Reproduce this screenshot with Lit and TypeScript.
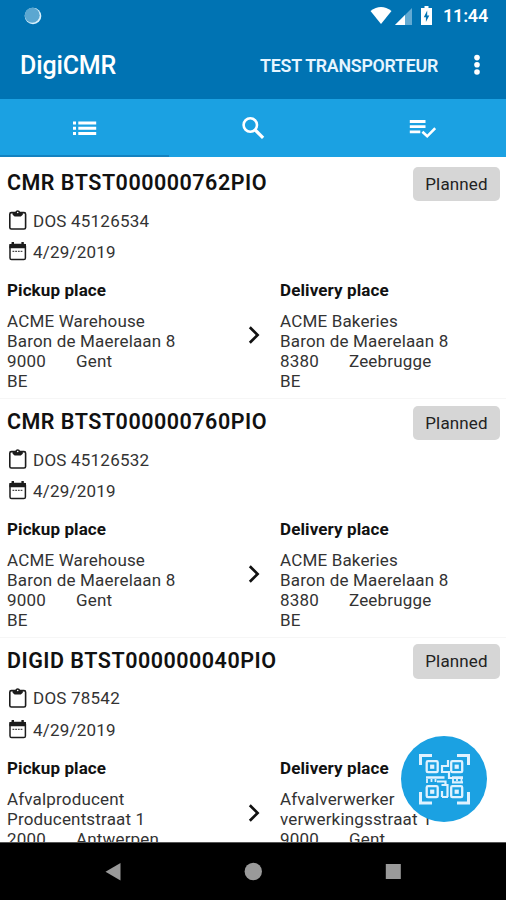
import { LitElement, html, css, svg } from "lit";
import { customElement, property } from "lit/decorators.js";

interface Place { label: string; name: string; street: string; zip: string; city: string; country: string; }
interface Doc { title: string; dossier: string; date: string; status: string; pickup: Place; delivery: Place; }

const acmePickup: Place = { label: "Pickup place", name: "ACME Warehouse", street: "Baron de Maerelaan 8", zip: "9000", city: "Gent", country: "BE" };
const acmeDelivery: Place = { label: "Delivery place", name: "ACME Bakeries", street: "Baron de Maerelaan 8", zip: "8380", city: "Zeebrugge", country: "BE" };

const docs: Doc[] = [
  { title: "CMR BTST000000762PIO", dossier: "DOS 45126534", date: "4/29/2019", status: "Planned", pickup: acmePickup, delivery: acmeDelivery },
  { title: "CMR BTST000000760PIO", dossier: "DOS 45126532", date: "4/29/2019", status: "Planned", pickup: acmePickup, delivery: acmeDelivery },
  {
    title: "DIGID BTST000000040PIO", dossier: "DOS 78542", date: "4/29/2019", status: "Planned",
    pickup: { label: "Pickup place", name: "Afvalproducent", street: "Producentstraat 1", zip: "2000", city: "Antwerpen", country: "BE" },
    delivery: { label: "Delivery place", name: "Afvalverwerker", street: "verwerkingsstraat 1", zip: "9000", city: "Gent", country: "BE" },
  },
];

@customElement("cmr-card")
export class CmrCard extends LitElement {
  @property({ attribute: false }) doc!: Doc;

  static styles = css`
    :host { display: block; box-sizing: border-box; height: 238.8px; padding: 0 6px 0 7px; border-bottom: 1.5px solid #f6f6f6; color: #333; font-size: 17px; line-height: 20px; flex: none; }
    .head { display: flex; justify-content: space-between; height: 45.2px; }
    .title { font-size: 21.5px; font-weight: 600; line-height: 46px; color: #111; letter-spacing: 0.5px; white-space: nowrap; }
    .badge { width: 87px; height: 34.5px; margin-top: 6.8px; border-radius: 5px; background: #d6d6d6; color: #222; line-height: 35px; text-align: center; letter-spacing: 0.15px; }
    .line { display: flex; align-items: center; height: 31.2px; gap: 5px; letter-spacing: 0.22px; }
    .icon { width: 21px; height: 21px; flex: none; color: #1c1c1c; }
    .places { display: grid; grid-template-columns: 233px 40px 1fr; margin-top: 12.7px; }
    .label { font-weight: 700; color: #111; letter-spacing: 0.1px; }
    .address { margin-top: 10.7px; letter-spacing: 0.17px; white-space: nowrap; }
    .town { display: flex; }
    .zip { width: 69px; }
    .arrow { align-self: start; width: 28px; height: 28px; margin-top: 41px; color: #111; }
  `;

  place(p: Place) {
    return html`<div class="place">
      <div class="label">${p.label}</div>
      <div class="address">
        <div>${p.name}</div>
        <div>${p.street}</div>
        <div class="town"><span class="zip">${p.zip}</span><span>${p.city}</span></div>
        <div>${p.country}</div>
      </div>
    </div>`;
  }

  render() {
    const d = this.doc;
    return html`
      <div class="head"><div class="title">${d.title}</div><div class="badge">${d.status}</div></div>
      <div class="line">
        <svg class="icon" viewBox="0 0 21 21"><rect x="2.800" y="2.600" width="15.800" height="16.400" rx="1.600" fill="none" stroke="currentColor" stroke-width="1.600"/><path d="M5.600 2.200h2.600a2.600 2.600 0 0 1 5 0h2.600v2.600l-2 1.600H7.600l-2-1.600z" fill="currentColor"/><circle cx="10.700" cy="2.500" r=".8" fill="#fff"/></svg>
        <span>${d.dossier}</span>
      </div>
      <div class="line">
        <svg class="icon" viewBox="0 0 21 21"><rect x="3" y="3.400" width="15.400" height="15.200" rx="1.600" fill="none" stroke="currentColor" stroke-width="1.500"/><path d="M2.400 3h2.200V1H7v2h7.400V1h2.400v2H19v4.200H2.400z" fill="currentColor"/><path d="M5.500 10.300h10.400" stroke="currentColor" stroke-width="1" stroke-dasharray="1.800 .9"/></svg>
        <span>${d.date}</span>
      </div>
      <div class="places">
        ${this.place(d.pickup)}
        <svg class="arrow" viewBox="0 0 28 28"><path d="M9.800 6.200 17.600 14l-7.800 7.800" fill="none" stroke="currentColor" stroke-width="2.700"/></svg>
        ${this.place(d.delivery)}
      </div>`;
  }
}

const finder = (x: number, y: number) => svg`
  <rect x=${x + 1.2} y=${y + 1.2} width="11" height="11" rx="1.2" fill="none" stroke="#dff2ff" stroke-width="2.3"/>
  <rect x=${x + 4.6} y=${y + 4.6} width="4.2" height="4.2" fill="#dff2ff"/>`;

@customElement("app-root")
export class AppRoot extends LitElement {
  static styles = css`
    :host { display: flex; flex-direction: column; position: relative; width: 506px; height: 900px; overflow: hidden; background: #fff; font-family: Roboto, "Liberation Sans", sans-serif; }
    .top { background: #0073b3; color: #fff; height: 98.5px; flex: none; }
    .status { display: flex; align-items: center; height: 32px; padding: 0 18px 0 23.5px; }
    .spacer { flex: 1; }
    .sync { width: 18px; height: 18px; margin-top: -1px; }
    .signals { width: 66px; height: 22px; margin-right: 7px; }
    .clock { width: 45px; font-size: 18px; font-weight: 600; line-height: 32px; white-space: nowrap; letter-spacing: -0.2px; }
    .bar { display: flex; align-items: center; height: 66px; padding: 0 21px 0 20px; }
    .brand { font-size: 25px; font-weight: 500; letter-spacing: -0.15px; flex: 1; }
    .user { font-size: 17.8px; font-weight: 600; letter-spacing: -0.25px; color: #e6f5ff; white-space: nowrap; }
    .more { width: 16px; height: 24px; margin-left: 31px; }
    .tabs { display: grid; grid-template-columns: repeat(3, 1fr); height: 58.5px; flex: none; background: #1ba1e2; color: #fff; }
    .tab { display: flex; align-items: center; justify-content: center; box-sizing: border-box; padding-top: 2px; border-bottom: 2px solid #1ba1e2; }
    .tab.active { border-bottom-color: #1382c0; }
    .tab svg { width: 28px; height: 28px; }
    .list { display: flex; flex-direction: column; flex: 1; min-height: 0; overflow: hidden; padding-top: 3px; }
    .nav { display: grid; grid-template-columns: repeat(3, 140px); justify-content: center; height: 58px; box-sizing: border-box; flex: none; background: #000; border-top: 1px solid #555; align-items: center; justify-items: center; }
    .nav svg { width: 20px; height: 20px; }
    .fab { position: absolute; left: 401px; top: 736px; width: 86px; height: 86px; border-radius: 50%; background: #1ba1e2; }
    .fab svg { width: 86px; height: 86px; display: block; }
  `;

  render() {
    return html`
      <div class="top">
        <div class="status">
          <svg class="sync" viewBox="0 0 18 18"><circle cx="9" cy="9" r="8.300" fill="#d8f0fc"/><circle cx="8.200" cy="8.200" r="7.500" fill="#5ba7d1"/></svg>
          <div class="spacer"></div>
          <svg class="signals" viewBox="0 0 66 22">
            <path d="M.5 6Q11-2 21.500 6L11 19z" fill="#fff"/>
            <path d="M42 3v17H25z" fill="#62aad3"/><path d="M35 10v10H25z" fill="#fff"/>
            <path d="M54.500 1h4v2H62v17H51V3h3.500z" fill="#fff"/><path d="M57.200 5.500l-3.400 6.700h2.100v4.800l3.400-6.500h-2.100z" fill="#0073b3"/>
          </svg>
          <div class="clock">11:44</div>
        </div>
        <div class="bar">
          <div class="brand">DigiCMR</div>
          <div class="user">TEST TRANSPORTEUR</div>
          <svg class="more" viewBox="0 0 16 24"><g fill="#fff"><circle cx="8" cy="4.600" r="2.800"/><circle cx="8" cy="11.800" r="2.800"/><circle cx="8" cy="19" r="2.800"/></g></svg>
        </div>
      </div>
      <div class="tabs">
        <div class="tab active"><svg viewBox="0 0 28 28"><path d="M3 7.500h3v3H3zm0 5.200h3v3H3zm0 5.200h3v3H3zM8.300 7.500h17.900v3H8.300zm0 5.200h17.900v3H8.300zm0 5.200h17.900v3H8.300z" fill="#fff"/></svg></div>
        <div class="tab"><svg viewBox="0 0 28 28"><circle cx="11.300" cy="11" r="6.700" fill="none" stroke="#fff" stroke-width="2.600"/><path d="M16.200 16l7.900 7.800" stroke="#fff" stroke-width="3.200"/></svg></div>
        <div class="tab"><svg viewBox="0 0 28 28"><path d="M1.800 6h15.700v2.900H1.800zm0 5.200h15.700v2.900H1.800zm0 5.200h10.500v2.900H1.800z" fill="#fff"/><path d="M14.400 17.800l4.800 4.500 8-8.200" fill="none" stroke="#fff" stroke-width="2.600"/></svg></div>
      </div>
      <div class="list">${docs.map((d) => html`<cmr-card .doc=${d}></cmr-card>`)}</div>
      <div class="nav">
        <svg viewBox="0 0 20 20"><path d="M17.500 1v17.500L2.500 9.700z" fill="#9a9a9a"/></svg>
        <svg viewBox="0 0 20 20"><circle cx="10.300" cy="9.500" r="8.700" fill="#9a9a9a"/></svg>
        <svg viewBox="0 0 20 20"><rect x="2.800" y="2" width="15" height="15" fill="#9a9a9a"/></svg>
      </div>
      <div class="fab"><svg viewBox="0 0 86 86">
        <path d="M19.500 29V19.500H31M56 19.500h11.500V29M67.500 56v11H56M31 67H19.500V56" fill="none" stroke="#dff2ff" stroke-width="3"/>
        ${finder(24.5, 24)}${finder(49, 24)}${finder(24.5, 49)}${finder(49, 49)}
        <path d="M47 24v6h-6v6h7v6h14M40.500 49h6V61M41 61h6M41 55v6" fill="none" stroke="#dff2ff" stroke-width="2.200"/>
        <path d="M25 41.500h18.500M51 41.500h11" fill="none" stroke="#dff2ff" stroke-width="2.600"/>
        <path d="M26 43v4M30.500 43v3M34.500 43v3M52 42v5M60.500 42v5M56 42v3" fill="none" stroke="#dff2ff" stroke-width="1.800"/>
        <path d="M36 45.500h8.500V50M51 46.300h11" fill="none" stroke="#dff2ff" stroke-width="2.200"/>
      </svg></div>`;
  }
}
